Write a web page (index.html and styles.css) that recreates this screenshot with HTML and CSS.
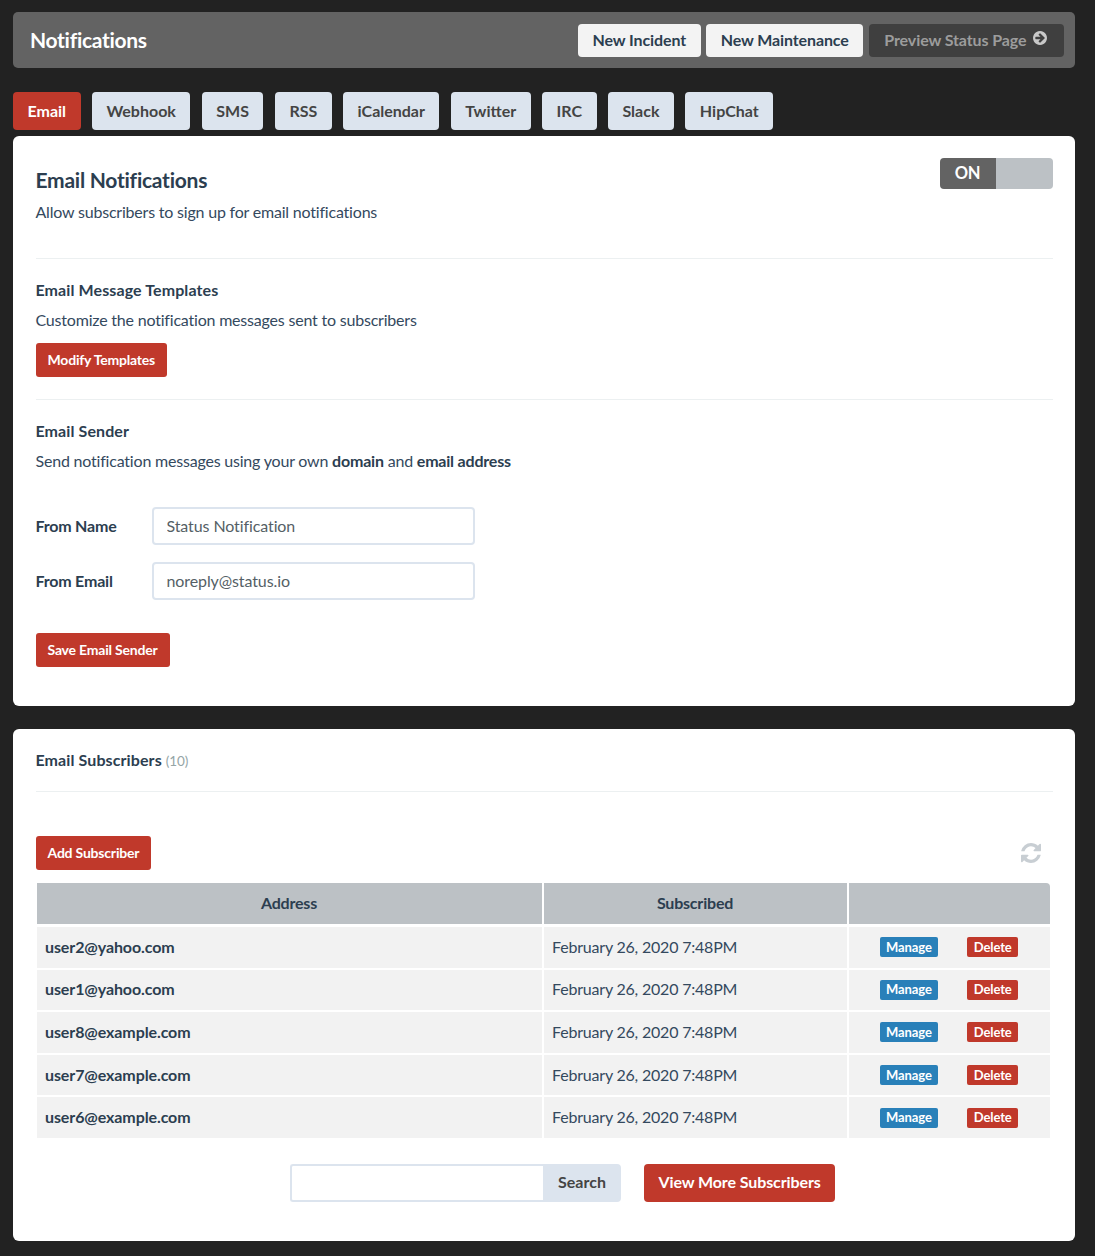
FILE: index.html
```html
<!DOCTYPE html>
<html lang="en">
<head>
<meta charset="utf-8">
<title>Notifications</title>
<link rel="stylesheet" href="styles.css">
</head>
<body>
<header class="topbar">
  <h1 class="topbar-title">Notifications</h1>
  <div class="topbar-actions">
    <a class="top-btn top-btn-light">New Incident</a>
    <a class="top-btn top-btn-light">New Maintenance</a>
    <a class="top-btn top-btn-dark">Preview Status Page
      <svg class="arrow-icon" viewBox="0 128 1536 1536"><path d="M1285 896q0-27-18-45l-91-91-362-362q-18-18-45-18t-45 18l-91 91q-18 18-18 45t18 45l189 189h-502q-26 0-45 19t-19 45v128q0 26 19 45t45 19h502l-189 189q-19 19-19 45t19 45l91 91q18 18 45 18t45-18l362-362 91-91q18-18 18-45zm251 0q0 209-103 385.5t-279.5 279.5-385.5 103-385.5-103-279.5-279.5-103-385.5 103-385.5 279.5-279.5 385.5-103 385.5 103 279.5 279.5 103 385.5z"/></svg>
    </a>
  </div>
</header>

<nav class="tabs">
  <a class="tab tab-active">Email</a>
  <a class="tab">Webhook</a>
  <a class="tab">SMS</a>
  <a class="tab">RSS</a>
  <a class="tab">iCalendar</a>
  <a class="tab">Twitter</a>
  <a class="tab">IRC</a>
  <a class="tab">Slack</a>
  <a class="tab">HipChat</a>
</nav>

<section class="card card-settings">
  <div class="section section-intro">
    <div class="intro-row">
      <h2 class="card-title">Email Notifications</h2>
      <div class="toggle"><span class="toggle-on">ON</span><span class="toggle-off"></span></div>
    </div>
    <p class="desc desc-intro">Allow subscribers to sign up for email notifications</p>
  </div>
  <div class="section section-templates">
    <h3 class="sub-title">Email Message Templates</h3>
    <p class="desc">Customize the notification messages sent to subscribers</p>
    <a class="btn-red">Modify Templates</a>
  </div>
  <div class="section-sender">
    <h3 class="sub-title">Email Sender</h3>
    <p class="desc">Send notification messages using your own <strong>domain</strong> and <strong>email address</strong></p>
    <form class="sender-form">
      <div class="field-row">
        <label class="field-label">From Name</label>
        <input class="field-input" type="text" value="Status Notification">
      </div>
      <div class="field-row">
        <label class="field-label">From Email</label>
        <input class="field-input" type="text" value="noreply@status.io">
      </div>
    </form>
    <a class="btn-red">Save Email Sender</a>
  </div>
</section>

<section class="card card-subs">
  <div class="subs-head">
    <h3 class="sub-title">Email Subscribers <span class="count">(10)</span></h3>
  </div>
  <div class="subs-toolbar">
    <a class="btn-red">Add Subscriber</a>
    <svg class="refresh-icon" viewBox="128 128 1536 1536"><path d="M1639 1056q0 5-1 7-64 268-268 434.5t-478 166.5q-146 0-282.5-55t-243.5-157l-129 129q-19 19-45 19t-45-19-19-45v-448q0-26 19-45t45-19h448q26 0 45 19t19 45-19 45l-137 137q71 66 161 102t187 36q134 0 250-65t186-179q11-17 53-117 8-23 30-23h192q13 0 22.5 9.5t9.5 22.5zm25-800v448q0 26-19 45t-45 19h-448q-26 0-45-19t-19-45 19-45l138-138q-148-137-349-137-134 0-250 65t-186 179q-11 17-53 117-8 23-30 23h-199q-13 0-22.5-9.5t-9.5-22.5v-7q65-268 270-434.5t480-166.5q146 0 284 55.5t245 156.5l130-129q19-19 45-19t45 19 19 45z"/></svg>
  </div>
  <table class="subs-table">
    <colgroup><col class="col-address"><col class="col-date"><col class="col-actions"></colgroup>
    <thead>
      <tr><th>Address</th><th>Subscribed</th><th></th></tr>
    </thead>
    <tbody>
      <tr><td class="cell-address">user2@yahoo.com</td><td>February 26, 2020 7:48PM</td><td><div class="row-actions"><a class="mini mini-blue">Manage</a><a class="mini mini-red">Delete</a></div></td></tr>
      <tr><td class="cell-address">user1@yahoo.com</td><td>February 26, 2020 7:48PM</td><td><div class="row-actions"><a class="mini mini-blue">Manage</a><a class="mini mini-red">Delete</a></div></td></tr>
      <tr><td class="cell-address">user8@example.com</td><td>February 26, 2020 7:48PM</td><td><div class="row-actions"><a class="mini mini-blue">Manage</a><a class="mini mini-red">Delete</a></div></td></tr>
      <tr><td class="cell-address">user7@example.com</td><td>February 26, 2020 7:48PM</td><td><div class="row-actions"><a class="mini mini-blue">Manage</a><a class="mini mini-red">Delete</a></div></td></tr>
      <tr><td class="cell-address">user6@example.com</td><td>February 26, 2020 7:48PM</td><td><div class="row-actions"><a class="mini mini-blue">Manage</a><a class="mini mini-red">Delete</a></div></td></tr>
    </tbody>
  </table>
  <div class="subs-footer">
    <div class="search-group">
      <input class="search-input" type="text">
      <a class="search-btn">Search</a>
    </div>
    <a class="btn-view-more">View More Subscribers</a>
  </div>
</section>
</body>
</html>
```

FILE: styles.css
```css
* { box-sizing: border-box; }
html, body { margin: 0; padding: 0; }
body {
  background: #222222;
  padding: 12px 20px 15px 13px;
  font-family: Lato, "Noto Sans", sans-serif;
  font-size: 16px;
  color: #2c3e50;
  letter-spacing: -0.2px;
}
h1, h2, h3, p { margin: 0; }

.topbar {
  height: 56px;
  background: #636363;
  border-radius: 5px;
  display: flex;
  align-items: center;
  justify-content: space-between;
  padding: 0 11px 0 17px;
}
.topbar-title { font-size: 21px; font-weight: 700; color: #fff; letter-spacing: -0.3px; padding-bottom: 2px; }
.topbar-actions { display: flex; gap: 5.5px; }
.top-btn {
  height: 33px;
  display: flex;
  align-items: center;
  padding: 0 14.5px 2px;
  border-radius: 4px;
  font-size: 16px;
  font-weight: 700;
  letter-spacing: -0.1px;
}
.top-btn-light { background: #f3f3f3; color: #2c3e50; }
.top-btn-dark { background: #3f3f3f; color: #9c9c9c; gap: 6px; padding-left: 15.5px; padding-right: 17.5px; }
.arrow-icon { width: 14px; height: 14px; fill: #c8c8c8; margin-top: -2px; }

.tabs { display: flex; gap: 11.4px; margin-top: 24px; }
.tab {
  height: 38px;
  display: flex;
  align-items: center;
  padding: 0 14.5px 2px;
  background: #dce4ee;
  color: #444444;
  border-radius: 4px;
  font-size: 16px;
  font-weight: 700;
  letter-spacing: 0;
}
.tab-active { background: #c0392b; color: #fff; }

.card { background: #fff; border-radius: 6px; padding: 0 22.5px; }
.card-settings { margin-top: 6px; height: 570px; padding-top: 22px; }
.card-subs { margin-top: 23px; height: 512px; }

.section { border-bottom: 1px solid #ecf0f1; }
.section-intro { height: 101px; }
.section-templates { height: 141px; padding-top: 21px; }
.section-sender { padding-top: 21px; }

.intro-row { display: flex; justify-content: space-between; align-items: flex-start; height: 42px; }
.card-title { font-size: 21px; font-weight: 700; line-height: 43px; letter-spacing: -0.25px; }
.toggle { display: flex; width: 113px; height: 31px; border-radius: 4px; overflow: hidden; }
.toggle-on {
  width: 56px;
  background: #636363;
  color: #fff;
  font-size: 16.5px;
  font-weight: 700;
  display: flex;
  align-items: center;
  justify-content: center;
  padding-bottom: 1px;
}
.toggle-off { flex: 1; background: #bcc1c5; }

.desc { font-size: 16px; line-height: 24px; color: #34495e; }
.desc strong { color: #2c3e50; }
.sub-title { font-size: 16px; font-weight: 700; line-height: 20px; color: #2c3e50; letter-spacing: 0.1px; }
.section-templates .desc, .section-sender .desc { margin-top: 8px; }

.btn-red {
  display: inline-flex;
  align-items: center;
  height: 34px;
  padding: 0 12px 2px;
  background: #c0392b;
  color: #fff;
  border-radius: 3px;
  font-size: 14px;
  font-weight: 700;
  letter-spacing: -0.2px;
}
.section-templates .btn-red { margin-top: 11px; }

.sender-form { margin-top: 34px; margin-bottom: 33px; display: flex; flex-direction: column; gap: 17px; }
.field-row { display: flex; align-items: center; }
.field-label { width: 116px; font-size: 16px; font-weight: 700; color: #2c3e50; padding-bottom: 2px; }
.field-input {
  width: 323px;
  height: 38px;
  padding: 0 13px 2px;
  border: 2px solid #dce4ee;
  border-radius: 4px;
  background: #fff;
  font: 400 16px Lato, "Noto Sans", sans-serif;
  letter-spacing: -0.1px;
  color: #555f66;
  outline: none;
}

.subs-head { height: 63px; padding-top: 20.5px; border-bottom: 1px solid #ecf0f1; }
.count { font-size: 13.5px; font-weight: 400; color: #95a5a6; letter-spacing: -0.1px; }
.subs-toolbar { margin-top: 44px; display: flex; justify-content: space-between; align-items: flex-start; padding-right: 11.5px; }
.refresh-icon { width: 20px; height: 20px; fill: #c8ced3; margin-top: 7px; }

.subs-table {
  margin-top: 11px;
  margin-left: -1px;
  width: 1017.5px;
  border-collapse: separate;
  border-spacing: 2px;
  table-layout: fixed;
}
.col-address { width: 505px; }
.col-date { width: 303px; }
.subs-table th {
  height: 42px;
  background: #bcc1c5;
  border-bottom: 1px solid #fff;
  font-size: 16px;
  font-weight: 700;
  color: #2c3e50;
  padding: 0 0 3px;
}
.subs-table td {
  height: 40.6px;
  background: #f2f2f2;
  font-size: 16px;
  color: #34495e;
  padding: 0 8.5px 2px;
}
.subs-table td.cell-address { font-weight: 700; color: #2c3e50; letter-spacing: -0.1px; }
.subs-table thead th:last-child { border-top-right-radius: 4px; }
.row-actions { display: flex; align-items: center; padding-left: 22.5px; gap: 29px; margin-top: 2px; }
.mini {
  height: 20px;
  display: flex;
  align-items: center;
  padding: 0 6.5px 1px;
  border-radius: 2px;
  color: #fff;
  font-size: 13px;
  font-weight: 700;
  letter-spacing: -0.1px;
}
.mini-blue { background: #2980b9; }
.mini-red { background: #c0392b; }

.subs-footer { margin-top: 24px; display: flex; gap: 23px; padding-left: 254.5px; }
.search-group { display: flex; width: 331px; height: 38px; }
.search-input {
  width: 253px;
  height: 38px;
  border: 2px solid #dce4ee;
  border-right: none;
  border-radius: 3px 0 0 3px;
  outline: none;
  background: #fff;
}
.search-btn {
  flex: 1;
  display: flex;
  align-items: center;
  justify-content: center;
  padding-bottom: 2px;
  background: #dce4ee;
  color: #444;
  font-size: 16px;
  font-weight: 700;
  letter-spacing: 0;
  border-radius: 0 4px 4px 0;
}
.btn-view-more {
  height: 38px;
  display: flex;
  align-items: center;
  padding: 0 14.5px 2px;
  background: #c0392b;
  color: #fff;
  border-radius: 4px;
  font-size: 16px;
  font-weight: 700;
  letter-spacing: -0.1px;
}
```
